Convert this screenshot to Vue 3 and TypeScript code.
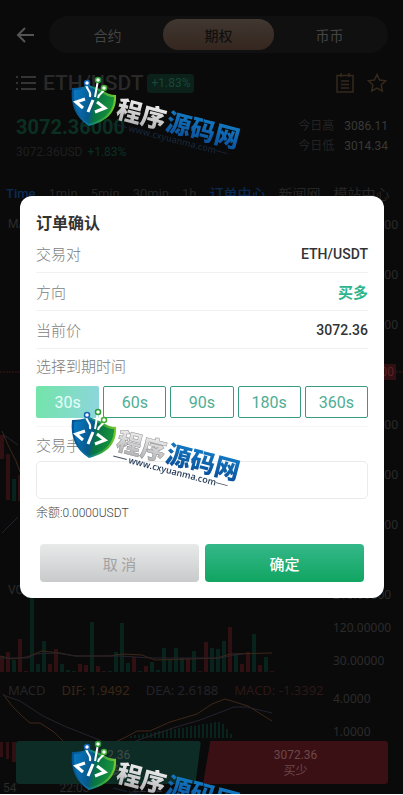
<script setup lang="ts">
import { ref } from 'vue'

interface Bar { up: boolean; h: number }

const markets = ['合约', '期权', '币币']
const activeMarket = ref('期权')

const intervals = ['Time', '1min', '5min', '30min', '1h']
const links = [
  { text: '订单中心', active: true },
  { text: '新闻网', active: false },
  { text: '模站中心', active: false },
  { text: '指', active: false },
]

const priceAxis = ['3090.00', '3085.00', '3080.00', '', '3070.00', '3065.00', '3060.00']

const volumes: Bar[] = (
  'r16 r20 g12 r33 r1 g84 g8 g31 r8 r23 g8 g2 g1 r8 r7 g50 r6 r1 g1 g20 g49 g9 r15 g1 r6 g10 g2 g24 g12 g24 g14 r14 g21 r1 r30 g24 g23 g31 r45 g18 r8 r20 g38 r7 g15 r1'
).split(' ').map((v) => ({ up: v[0] === 'g', h: Number(v.slice(1)) }))

const histogram = Array.from({ length: 26 }, (_, i) => ({
  x: 130 + i * 4,
  h: Math.round(i < 23 ? 2 + i * 0.65 : 14 - (i - 23) * 5),
}))

const durations = ['30s', '60s', '90s', '180s', '360s']
const duration = ref('30s')
const amount = ref('')
const marks = ['top', 'middle', 'bottom']
</script>

<template>
  <div class="page">
    <header class="header">
      <button class="back" aria-label="返回">
        <svg width="20" height="18" viewBox="0 0 20 18"><path d="M9 2 2 9l7 7M2 9h16" /></svg>
      </button>
      <nav class="markets">
        <button v-for="m in markets" :key="m" :class="{ on: m === activeMarket }" @click="activeMarket = m">{{ m }}</button>
      </nav>
    </header>

    <section class="pair">
      <svg class="list" width="20" height="14" viewBox="0 0 20 14"><path d="M0 1h2M0 7h2M0 13h2M5 1h15M5 7h15M5 13h15" /></svg>
      <h1>ETH/USDT</h1>
      <span class="badge">+1.83%</span>
      <svg class="tool first" width="20" height="20" viewBox="0 0 20 20"><path d="M2 2.500h16V19H2zM6 0v4M14 0v4M6 8h8M6 11.500h8M6 15h8" /></svg>
      <svg class="tool" width="20" height="20" viewBox="0 0 20 20"><path d="m10 1.500 2.600 5.600 6 .7-4.400 4.200 1.100 6-5.300-3-5.300 3 1.100-6L1.400 7.800l6-.7z" /></svg>
    </section>

    <section class="quote">
      <div>
        <strong>3072.36000</strong>
        <p>3072.36USD <span>+1.83%</span></p>
      </div>
      <dl>
        <dt>今日高</dt><dd>3086.11</dd>
        <dt>今日低</dt><dd>3014.34</dd>
      </dl>
    </section>

    <nav class="intervals">
      <span v-for="(t, i) in intervals" :key="t" :class="{ on: i === 0 }">{{ t }}</span>
      <span v-for="l in links" :key="l.text" class="cjk" :class="{ on: l.active }">{{ l.text }}</span>
    </nav>

    <section class="panel candles">
      <span class="legend">MA</span>
      <svg class="plot" viewBox="0 0 403 376" preserveAspectRatio="none">
        <path class="red dash" d="M0 165h403" />
        <path class="redfill" d="M0 228h4v24H0zM6 247h4v46H6zM18 268h3v26h-3z" />
        <path class="tealfill" d="M12 272h4v22h-4z" />
        <path class="orange" d="M2 224 8 238l8 16 6 16" />
        <path class="violet" d="M2 326 18 310M4 228l14 10" />
      </svg>
      <div class="axis prices"><span v-for="(p, i) in priceAxis" :key="i">{{ p }}</span></div>
      <span class="tag">3072.36000</span>
    </section>

    <section class="panel volume">
      <span class="legend">VOL</span>
      <svg class="plot" viewBox="0 0 403 89" preserveAspectRatio="none">
        <rect v-for="(b, i) in volumes" :key="i" :class="b.up ? 'tealfill' : 'redfill'" :x="i * 6" :y="89 - b.h" width="4" :height="b.h" />
        <path class="orange" d="M0 73 12 76 27 74 42 68 60 70 75 73 110 73 122 71 142 72 155 77 190 76 218 75 230 71 272 70" />
        <path class="violet" d="M0 75h28l8-4 20-1 20 3h44l30 2h70l14-3 10-1" />
      </svg>
      <div class="axis"><span>210.00000</span><span>120.00000</span><span>30.00000</span></div>
    </section>

    <section class="panel macd">
      <div class="values"><span>MACD</span><span class="dif">DIF: 1.9492</span><span class="dea">DEA: 2.6188</span><span class="val">MACD: -1.3392</span></div>
      <svg class="plot" viewBox="0 0 403 110" preserveAspectRatio="none">
        <rect v-for="b in histogram" :key="b.x" class="tealfill" :x="b.x" :y="56 - b.h" width="2" :height="b.h" />
        <path class="redfill" d="M0 60h3v15H0zM6 60h3v17H6zM12 60h4v20h-4z" />
        <path class="orange" d="M3 12 12 24 22 34 30 41 40 41 54 50 64 60 90 72 126 55 137 49 150 49 170 40 197 32 212 22 225 17 248 24 272 39" />
        <path class="violet" d="M3 13 20 19 43 34 64 44 97 57 118 66 144 56 173 46 200 38 234 25 247 25 272 31" />
      </svg>
      <div class="axis"><span>4.0000</span><span>1.0000</span></div>
      <div class="times"><span>54</span><span>22:03</span><span>22:12</span></div>
    </section>

    <div class="trade">
      <button class="long"><span>3072.36</span><span>买多</span></button>
      <button class="short"><span>3072.36</span><span>买少</span></button>
    </div>

    <div class="overlay">
      <form class="dialog" role="dialog" aria-labelledby="dialog-title" @submit.prevent>
        <h2 id="dialog-title">订单确认</h2>
        <div class="row"><span>交易对</span><b>ETH/USDT</b></div>
        <div class="row"><span>方向</span><b class="buy">买多</b></div>
        <div class="row"><span>当前价</span><b>3072.36</b></div>
        <div class="label">选择到期时间</div>
        <div class="durations">
          <button v-for="d in durations" :key="d" type="button" :class="{ on: d === duration }" @click="duration = d">{{ d }}</button>
        </div>
        <label class="label amount" for="amount">交易手数</label>
        <input id="amount" v-model="amount" type="text" inputmode="decimal" />
        <p class="balance">余额:0.0000USDT</p>
        <div class="actions">
          <button type="button" class="cancel">取 消</button>
          <button type="submit" class="ok">确定</button>
        </div>
      </form>
    </div>

    <div class="marks">
      <svg v-for="m in marks" :key="m" :class="['mark', m]" width="176" height="86" viewBox="0 0 176 86">
        <defs>
          <linearGradient :id="'shield-' + m" x1="0" y1=".4" x2="1" y2=".6"><stop offset="0" stop-color="#0876bd" /><stop offset=".42" stop-color="#07588c" /><stop offset=".55" stop-color="#087344" /><stop offset="1" stop-color="#18983a" /></linearGradient>
          <linearGradient :id="'rim-' + m" x1="0" y1="0" x2="1" y2="0"><stop offset="0" stop-color="#075091" /><stop offset=".35" stop-color="#0875a5" /><stop offset=".7" stop-color="#35a836" /><stop offset="1" stop-color="#79c92d" /></linearGradient>
          <linearGradient :id="'silver-' + m" x1="0" y1="0" x2="0" y2="1"><stop offset="0" stop-color="#ffffff" /><stop offset="1" stop-color="#a9a9ab" /></linearGradient>
          <linearGradient :id="'blue-' + m" x1="0" y1="0" x2="0" y2="1"><stop offset="0" stop-color="#1686cf" /><stop offset="1" stop-color="#0a4993" /></linearGradient>
        </defs>
        <path :fill="`url(#rim-${m})`" d="M2 13c7 0 12-1 17-3l13 5c4 3 9 5 14 5 1 15-7 26-27 31C6 43 0 30 2 13z" />
        <path :fill="`url(#shield-${m})`" d="M4 15c6 0 11-1 15-3l12 5c4 3 8 5 13 5 0 13-7 22-25 27C8 42 3 30 4 15z" />
        <path class="stem" d="M17 8c-3 7 5 6 3 14M28 5l-3 17M34 13c0 6-5 4-6 10" />
        <circle cx="17" cy="8" r="2.500" fill="#fff" stroke="#1464b5" stroke-width="1.500" />
        <circle cx="28" cy="5" r="2.500" fill="#fff" stroke="#2d9c36" stroke-width="1.500" />
        <circle cx="34" cy="13" r="2.500" fill="#fff" stroke="#43ad32" stroke-width="1.500" />
        <path class="code" d="m15 24-9 3 7 6M23 25l-5 12M27 27l8 6-10 4" />
        <g transform="translate(45 42) rotate(14.500)">
          <text class="brand" :fill="`url(#silver-${m})`" :stroke="m === 'middle' ? '#8d8d90' : 'none'" stroke-width=".5">程序</text>
          <text class="brand" x="51" :fill="`url(#blue-${m})`">源码网</text>
        </g>
        <g transform="translate(58 56) rotate(14.500)">
          <text class="url" :class="{ dim: m !== 'middle' }">www.cxyuanma.com</text>
          <path class="rule" :class="{ dim: m !== 'middle' }" d="M-16-3h14M90-3h12" />
        </g>
      </svg>
    </div>
  </div>
</template>

<style>
body { margin: 0; background: #fff; }
</style>

<style scoped>
* { box-sizing: border-box; }
.page {
  position: relative;
  display: flex;
  flex-direction: column;
  height: calc(100vh - 1px);
  overflow: hidden;
  background: #0a0a0a;
  color: #2b2b2b;
  font-family: Roboto, "Noto Sans CJK SC", sans-serif;
  font-size: 12px;
}
button { border: 0; padding: 0; font: inherit; background: none; color: inherit; }
p, h1, h2, dl, dd { margin: 0; }
svg { flex: none; }

.header { display: flex; align-items: center; gap: 13px; padding: 16px 15px 0 16px; }
.back { width: 20px; height: 20px; }
.back svg { display: block; fill: none; stroke: #555; stroke-width: 2; }
.markets { display: grid; flex: 1; grid-template-columns: repeat(3, 1fr); height: 37px; padding: 3px; border-radius: 19px; background: #101010; }
.markets button { border-radius: 16px; font-size: 14px; color: #444; }
.markets .on { background: linear-gradient(#403731, #35271f); color: #111; font-weight: 500; }

.pair { display: flex; align-items: center; height: 30px; margin: 15px 16px 0; }
.list { margin-right: 7px; fill: none; stroke: #343434; stroke-width: 2; }
.pair h1 { font-size: 21px; line-height: 30px; font-weight: 500; color: #292929; }
.badge { margin-left: 4px; padding: 0 4px; border-radius: 3px; background: #0c2119; color: #17483a; font-size: 12px; line-height: 19px; }
.tool { margin-left: 12px; fill: none; stroke: #35291e; stroke-width: 1.5; }
.tool.first { margin-left: auto; }

.quote { display: flex; justify-content: space-between; height: 50px; margin: 14px 15px 0 16px; }
.quote strong { display: block; margin-top: 1px; font-size: 20px; line-height: 28px; font-weight: 700; color: #0b3023; }
.quote p { margin-top: 3px; font-size: 12px; line-height: 16px; color: #1f1f1f; }
.quote p span { margin-left: 2px; color: #0b3023; }
.quote dl { display: grid; grid-template-columns: auto auto; gap: 0 10px; align-content: start; line-height: 20px; color: #232323; margin-top: 4px; }
.quote dd { color: #393939; text-align: right; }

.intervals { display: flex; gap: 13px; margin-top: 24px; padding-left: 6px; font-size: 14px; line-height: 20px; white-space: nowrap; color: #262626; }
.intervals span { font-size: 13px; }
.intervals .cjk { font-size: 14px; }
.intervals .on { color: #0b2a55; font-weight: 500; }

.panel { position: relative; flex: none; color: #2b2b2b; }
.plot { display: block; width: 100%; height: 100%; }
.plot path { fill: none; }
.plot .red { stroke: #3f1517; }
.plot .dash { stroke-dasharray: 2 1; }
.plot .orange { stroke: #3f2718; }
.plot .violet { stroke: #25222e; }
.plot .redfill { fill: #301012; }
.plot .tealfill { fill: #08231b; }
.legend { position: absolute; left: 8px; top: 0; }
.candles { height: 376px; margin-top: 3px; }
.candles .legend { top: 10px; }
.volume { height: 89px; }
.macd { height: 120px; margin-top: 10px; }
.macd .plot { height: 110px; }
.macd .axis { top: 9px; }
.axis { position: absolute; top: 4px; right: 10px; width: 60px; display: grid; grid-auto-rows: 33px; font-family: "Noto Sans", sans-serif; font-size: 12px; line-height: 16px; }
.candles .prices { top: 10px; right: 5px; grid-auto-rows: 50px; justify-items: end; }
.tag { position: absolute; top: 157px; right: 7px; background: #301012; color: #5c2225; line-height: 16px; padding: 0 2px; }
.values { position: absolute; left: 8px; top: 0; display: flex; gap: 16px; font-family: "Noto Sans", sans-serif; font-size: 13px; line-height: 16px; color: #252525; }
.dif { color: #3a2616; }
.dea { color: #24222b; }
.val { color: #2c1818; }
.times { position: absolute; left: 3px; top: 99px; display: flex; gap: 43px; line-height: 14px; }

.trade { position: absolute; left: 16px; right: 15px; bottom: 10px; display: flex; gap: 2px; }
.trade button { display: flex; flex: 1; flex-direction: column; align-items: center; justify-content: center; height: 43px; border-radius: 3px; line-height: 16px; }
.trade .long { background: #0c2c25; color: #454b48; clip-path: polygon(0 0, 100% 0, 97% 100%, 0 100%); }
.trade .short { background: #3b1015; color: #6b484a; clip-path: polygon(4% 0, 100% 0, 100% 100%, 0 100%); }

.overlay { position: fixed; inset: 0; display: flex; align-items: center; padding: 0 19px 1px 20px; }
.dialog { width: 100%; padding: 16px; border-radius: 12px; background: #fff; color: #333; }
.dialog h2 { font-size: 16px; line-height: 23px; font-weight: 700; }
.row { display: flex; align-items: center; justify-content: space-between; height: 38px; border-bottom: 1px solid #f1f1f1; font-size: 15px; }
.row span, .label { color: #7d7d7d; font-weight: 300; }
.row b { font-weight: 500; font-size: 14px; }
.row .buy { color: #2cb58c; font-weight: 700; font-size: 15px; }
.label { display: block; font-size: 15px; line-height: 37px; }
.durations { display: grid; grid-template-columns: repeat(5, 1fr); gap: 4px; }
.durations button { height: 32px; border: 1px solid #3a9b83; border-radius: 2px; color: #4fae95; font-size: 16px; }
.durations .on { border: 0; background: linear-gradient(100deg, #72e5a8, #8ed5de); color: #e9fff8; }
.amount { margin-top: 8px; padding-top: 5px; border-top: 1px solid #f7f7f7; line-height: 29px; }
.dialog input { display: block; width: 100%; height: 38px; padding: 0 10px; border: 1px solid #ebebeb; border-radius: 5px; background: #fff; font: inherit; font-size: 15px; outline: none; }
.balance { font-size: 12px; line-height: 28px; font-weight: 300; color: #444; }
.actions { display: grid; grid-template-columns: 1fr 1fr; gap: 6px; margin: 17px 4px 0; }
.actions button { height: 38px; border-radius: 4px; font-size: 15px; }
.actions .cancel { background: linear-gradient(#e8e9e9, #c9cacb); color: #a2a2a2; }
.actions .ok { background: linear-gradient(#34b88a, #11a561); color: #fff; font-weight: 500; }

.marks { position: absolute; inset: 0; overflow: hidden; pointer-events: none; }
.mark { position: absolute; left: 70px; }
.top { top: 75px; }
.middle { top: 407px; }
.bottom { top: 739px; }
.stem { fill: none; stroke: #fff; stroke-width: 2; }
.code { fill: none; stroke: #fff; stroke-width: 3; }
.brand { font-family: "Noto Sans CJK SC", sans-serif; font-size: 25px; font-weight: 900; }
.url { font-family: "Open Sans", sans-serif; font-size: 9px; font-weight: 600; fill: #263d59; }
.url.dim { fill: #172638; }
.rule { stroke: #4a5563; stroke-width: 1; }
.rule.dim { stroke: #172638; }
</style>
